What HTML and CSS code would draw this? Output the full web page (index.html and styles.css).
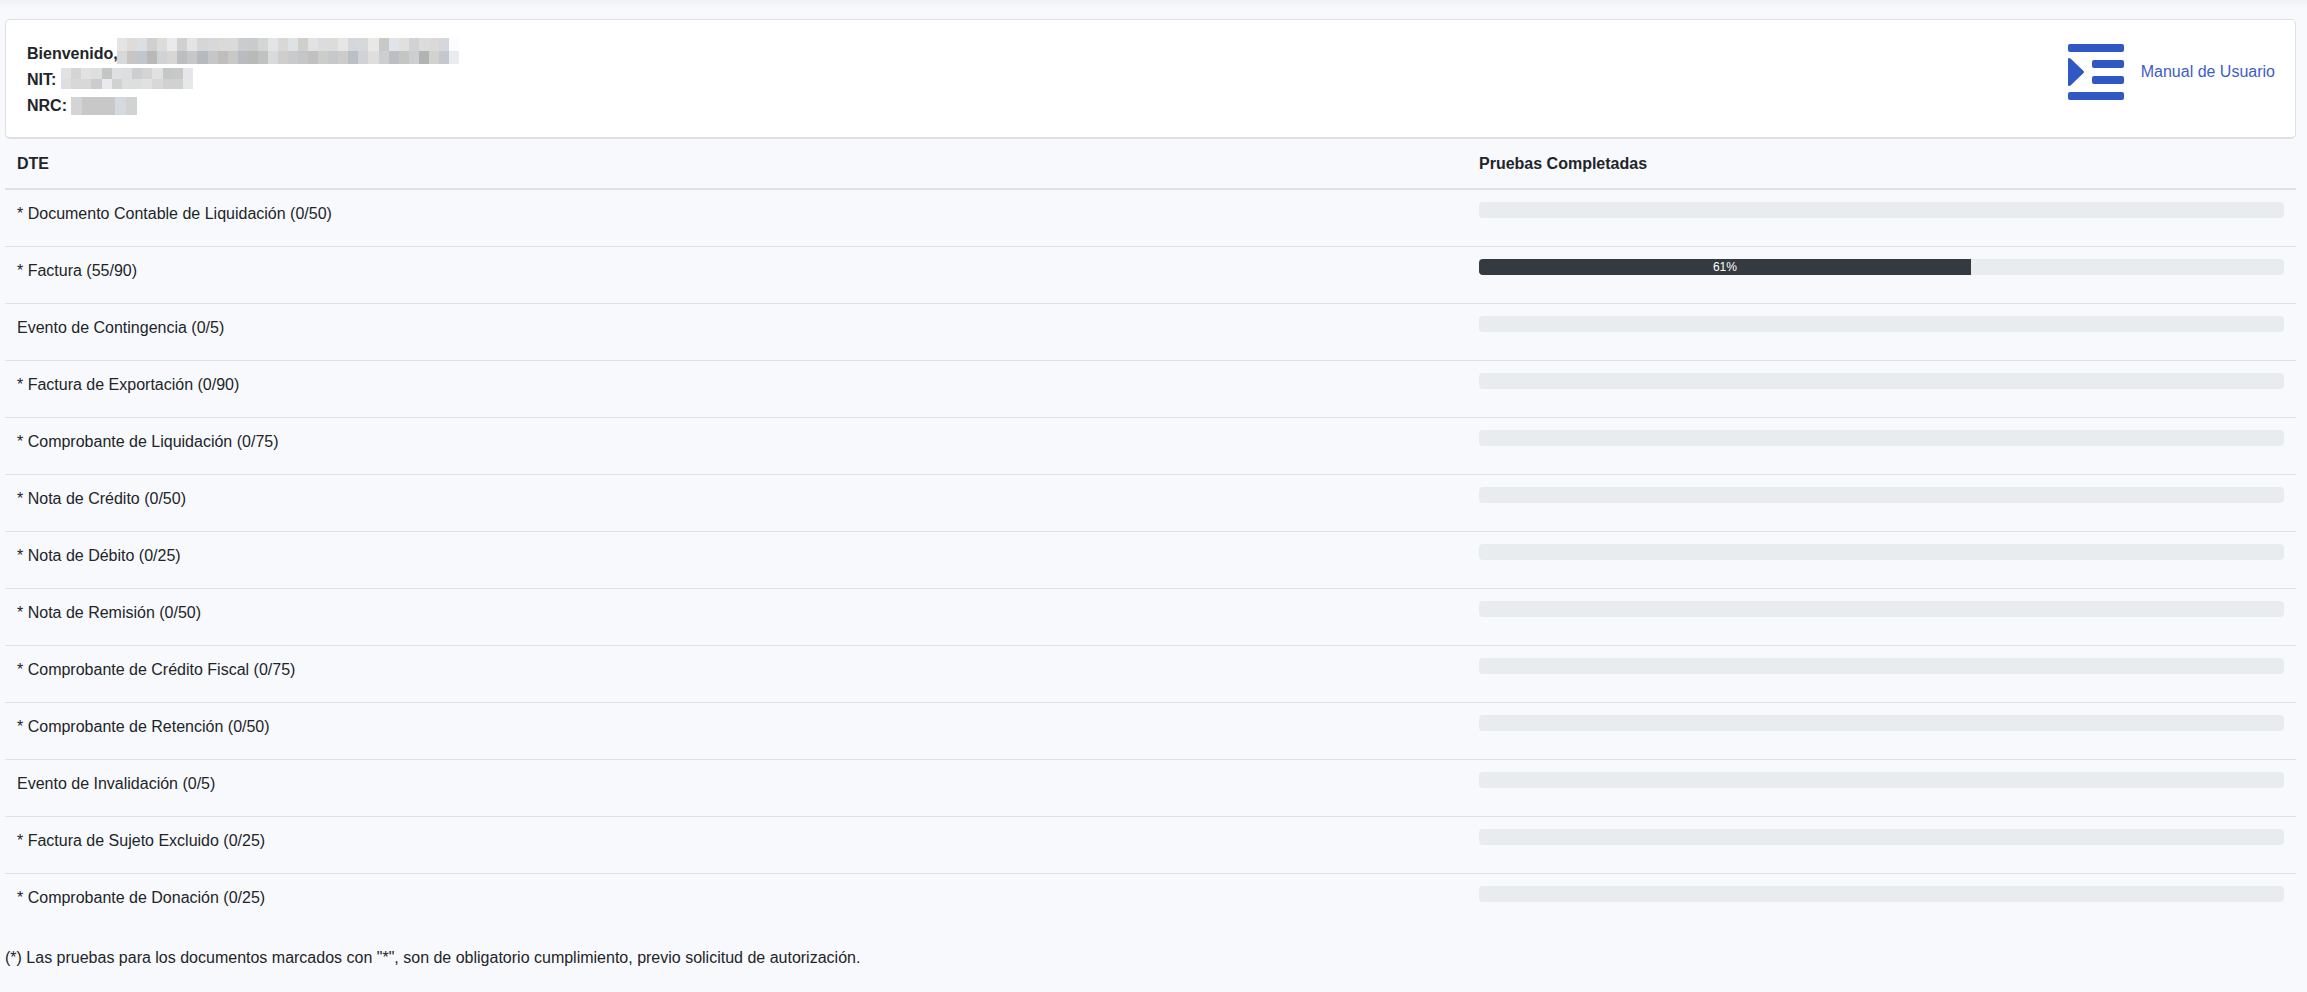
FILE: index.html
```html
<!DOCTYPE html>
<html lang="es">
<head>
<meta charset="utf-8">
<title>Pruebas DTE</title>
<link rel="stylesheet" href="styles.css">
</head>
<body>
<div class="topbar"></div>
<main class="page">
  <section class="card">
    <div class="who">
      <div class="line"><b>Bienvenido,</b>
        <svg class="mosaic m-name" width="342" height="26" viewBox="0 0 34 2" preserveAspectRatio="none" shape-rendering="crispEdges"><g>
          <rect x="0" y="0" width="1" height="1" fill="#e4e4e4"/><rect x="1" y="0" width="1" height="1" fill="#dedcda"/><rect x="2" y="0" width="1" height="1" fill="#d9dfe3"/><rect x="3" y="0" width="1" height="1" fill="#d0d0d0"/><rect x="4" y="0" width="1" height="1" fill="#dcdcda"/><rect x="5" y="0" width="1" height="1" fill="#e9eaec"/><rect x="6" y="0" width="1" height="1" fill="#cfd0d2"/><rect x="7" y="0" width="1" height="1" fill="#e4e4e4"/><rect x="8" y="0" width="1" height="1" fill="#d5d6d8"/><rect x="9" y="0" width="1" height="1" fill="#d6d8da"/><rect x="10" y="0" width="1" height="1" fill="#dadad8"/><rect x="11" y="0" width="1" height="1" fill="#dcdad8"/><rect x="12" y="0" width="1" height="1" fill="#cbcccd"/><rect x="13" y="0" width="1" height="1" fill="#cacbcd"/><rect x="14" y="0" width="1" height="1" fill="#d4d6d6"/><rect x="15" y="0" width="1" height="1" fill="#e2e4e6"/><rect x="16" y="0" width="1" height="1" fill="#d8d8d6"/><rect x="17" y="0" width="1" height="1" fill="#dfe2e4"/><rect x="18" y="0" width="1" height="1" fill="#cfcfcb"/><rect x="19" y="0" width="1" height="1" fill="#e0e2e4"/><rect x="20" y="0" width="1" height="1" fill="#dadcde"/><rect x="21" y="0" width="1" height="1" fill="#dcdcda"/><rect x="22" y="0" width="1" height="1" fill="#e6e6e6"/><rect x="23" y="0" width="1" height="1" fill="#d4d8dc"/><rect x="24" y="0" width="1" height="1" fill="#d6d8da"/><rect x="25" y="0" width="1" height="1" fill="#e8e8e6"/><rect x="26" y="0" width="1" height="1" fill="#c8c8c6"/><rect x="27" y="0" width="1" height="1" fill="#e0e4e8"/><rect x="28" y="0" width="1" height="1" fill="#e0e0de"/><rect x="29" y="0" width="1" height="1" fill="#d0d2d4"/><rect x="30" y="0" width="1" height="1" fill="#dcdcda"/><rect x="31" y="0" width="1" height="1" fill="#dcdad8"/><rect x="32" y="0" width="1" height="1" fill="#d4d8dc"/><rect x="33" y="0" width="1" height="1" fill="#fbfcfd"/>
          <rect x="0" y="1" width="1" height="1" fill="#d8d8d8"/><rect x="1" y="1" width="1" height="1" fill="#c8c6c4"/><rect x="2" y="1" width="1" height="1" fill="#c0c6ca"/><rect x="3" y="1" width="1" height="1" fill="#b8b8b8"/><rect x="4" y="1" width="1" height="1" fill="#d0d2d4"/><rect x="5" y="1" width="1" height="1" fill="#d8d6d2"/><rect x="6" y="1" width="1" height="1" fill="#bcbec2"/><rect x="7" y="1" width="1" height="1" fill="#c6c8c8"/><rect x="8" y="1" width="1" height="1" fill="#b4babe"/><rect x="9" y="1" width="1" height="1" fill="#c4c6c8"/><rect x="10" y="1" width="1" height="1" fill="#c0bebc"/><rect x="11" y="1" width="1" height="1" fill="#c8c8c6"/><rect x="12" y="1" width="1" height="1" fill="#b8bcc2"/><rect x="13" y="1" width="1" height="1" fill="#b8bab8"/><rect x="14" y="1" width="1" height="1" fill="#c0c2c2"/><rect x="15" y="1" width="1" height="1" fill="#d8dadc"/><rect x="16" y="1" width="1" height="1" fill="#d0cecc"/><rect x="17" y="1" width="1" height="1" fill="#c8cacc"/><rect x="18" y="1" width="1" height="1" fill="#c4c6c8"/><rect x="19" y="1" width="1" height="1" fill="#c2c0be"/><rect x="20" y="1" width="1" height="1" fill="#ccccca"/><rect x="21" y="1" width="1" height="1" fill="#c6c8ca"/><rect x="22" y="1" width="1" height="1" fill="#ccccca"/><rect x="23" y="1" width="1" height="1" fill="#b8c0c6"/><rect x="24" y="1" width="1" height="1" fill="#d0d2d6"/><rect x="25" y="1" width="1" height="1" fill="#e0dedc"/><rect x="26" y="1" width="1" height="1" fill="#ccced0"/><rect x="27" y="1" width="1" height="1" fill="#bcbec4"/><rect x="28" y="1" width="1" height="1" fill="#c4c6c6"/><rect x="29" y="1" width="1" height="1" fill="#ccced0"/><rect x="30" y="1" width="1" height="1" fill="#b0b2b4"/><rect x="31" y="1" width="1" height="1" fill="#d4d2ce"/><rect x="32" y="1" width="1" height="1" fill="#c4c8cc"/><rect x="33" y="1" width="1" height="1" fill="#e8ebf0"/>
        </g></svg>
      </div>
      <div class="line"><b>NIT:</b>
        <svg class="mosaic m-nit" width="132" height="21" viewBox="0 0 13 2" preserveAspectRatio="none" shape-rendering="crispEdges"><g>
          <rect x="0" y="0" width="1" height="1" fill="#e0e2e4"/><rect x="1" y="0" width="1" height="1" fill="#d4d4d4"/><rect x="2" y="0" width="1" height="1" fill="#e2e2e2"/><rect x="3" y="0" width="1" height="1" fill="#dcdee0"/><rect x="4" y="0" width="1" height="1" fill="#c4c6c6"/><rect x="5" y="0" width="1" height="1" fill="#dee0e4"/><rect x="6" y="0" width="1" height="1" fill="#dcdee0"/><rect x="7" y="0" width="1" height="1" fill="#ccced0"/><rect x="8" y="0" width="1" height="1" fill="#d4d4d6"/><rect x="9" y="0" width="1" height="1" fill="#e0e2e2"/><rect x="10" y="0" width="1" height="1" fill="#c4c6c8"/><rect x="11" y="0" width="1" height="1" fill="#c8c8c8"/><rect x="12" y="0" width="1" height="1" fill="#e4e6ea"/>
          <rect x="0" y="1" width="1" height="1" fill="#dedede"/><rect x="1" y="1" width="1" height="1" fill="#d8d8d8"/><rect x="2" y="1" width="1" height="1" fill="#d8d8d8"/><rect x="3" y="1" width="1" height="1" fill="#cccccc"/><rect x="4" y="1" width="1" height="1" fill="#e8eaee"/><rect x="5" y="1" width="1" height="1" fill="#d0d2d2"/><rect x="6" y="1" width="1" height="1" fill="#dcdee0"/><rect x="7" y="1" width="1" height="1" fill="#dcdee0"/><rect x="8" y="1" width="1" height="1" fill="#e0e2e2"/><rect x="9" y="1" width="1" height="1" fill="#d8d8d8"/><rect x="10" y="1" width="1" height="1" fill="#d0d2d2"/><rect x="11" y="1" width="1" height="1" fill="#d0d2d2"/><rect x="12" y="1" width="1" height="1" fill="#e6e8ea"/>
        </g></svg>
      </div>
      <div class="line"><b>NRC:</b>
        <svg class="mosaic m-nrc" width="66" height="18" viewBox="0 0 6 1" preserveAspectRatio="none" shape-rendering="crispEdges"><g>
          <rect x="0" y="0" width="1" height="1" fill="#d4d4d4"/><rect x="1" y="0" width="1" height="1" fill="#c8c8c8"/><rect x="2" y="0" width="1" height="1" fill="#c8c8c8"/><rect x="3" y="0" width="1" height="1" fill="#c8c8c8"/><rect x="4" y="0" width="1" height="1" fill="#d4dade"/><rect x="5" y="0" width="1" height="1" fill="#d0d2d4"/>
        </g></svg>
      </div>
    </div>
    <a class="manual" href="#">
      <svg class="icon" width="56" height="56" viewBox="0 0 56 56"><g fill="#2f58c4"><rect x="0" y="0" width="56" height="8" rx="2"/><rect x="24" y="16" width="32" height="8" rx="2"/><rect x="24" y="32" width="32" height="8" rx="2"/><rect x="0" y="48" width="56" height="8" rx="2"/><path d="M0 15.500C0 14 1.500 13.500 2.500 14.500L15.500 27C16.200 27.600 16.200 28.400 15.500 29L2.500 41.500C1.500 42.500 0 42 0 40.500Z"/></g></svg>
      <span>Manual de Usuario</span>
    </a>
  </section>
  <table class="grid">
    <thead><tr><th class="c1">DTE</th><th>Pruebas Completadas</th></tr></thead>
    <tbody>
      <tr><td>* Documento Contable de Liquidación (0/50)</td><td><div class="bar"></div></td></tr>
      <tr><td>* Factura (55/90)</td><td><div class="bar"><div class="fill" style="width:61.11%">61%</div></div></td></tr>
      <tr><td>Evento de Contingencia (0/5)</td><td><div class="bar"></div></td></tr>
      <tr><td>* Factura de Exportación (0/90)</td><td><div class="bar"></div></td></tr>
      <tr><td>* Comprobante de Liquidación (0/75)</td><td><div class="bar"></div></td></tr>
      <tr><td>* Nota de Crédito (0/50)</td><td><div class="bar"></div></td></tr>
      <tr><td>* Nota de Débito (0/25)</td><td><div class="bar"></div></td></tr>
      <tr><td>* Nota de Remisión (0/50)</td><td><div class="bar"></div></td></tr>
      <tr><td>* Comprobante de Crédito Fiscal (0/75)</td><td><div class="bar"></div></td></tr>
      <tr><td>* Comprobante de Retención (0/50)</td><td><div class="bar"></div></td></tr>
      <tr><td>Evento de Invalidación (0/5)</td><td><div class="bar"></div></td></tr>
      <tr><td>* Factura de Sujeto Excluido (0/25)</td><td><div class="bar"></div></td></tr>
      <tr class="last"><td>* Comprobante de Donación (0/25)</td><td><div class="bar"></div></td></tr>
    </tbody>
  </table>
  <p class="note">(*) Las pruebas para los documentos marcados con "*", son de obligatorio cumplimiento, previo solicitud de autorización.</p>
</main>
</body>
</html>
```
FILE: styles.css
```css
* { box-sizing: border-box; }
html, body { margin: 0; padding: 0; }
body { height: 992px; overflow: hidden; background: #f8f9fc; color: #212529; font-family: "Liberation Sans", Arial, sans-serif; font-size: 16px; line-height: 24px; }
.topbar { height: 8px; background: linear-gradient(#f1f2f5, #f8f9fc); }
.page { padding: 11px 11px 0 5px; }
.card { height: 120px; background: #fff; border: 1px solid #dfe0e3; border-bottom-width: 2px; border-radius: 5px; display: flex; justify-content: space-between; align-items: flex-start; padding: 21px 20px 0 21px; }
.who { line-height: 26px; }
.line { display: flex; height: 26px; align-items: center; }
.line b { font-weight: 700; position: relative; z-index: 1; }
.mosaic { display: block; flex: none; }
.m-name { margin: -3px 0 0 -0.5px; align-self: flex-start; }
.m-nit { margin: 1px 0 0 5px; align-self: flex-start; }
.m-nrc { margin-left: 4px; }
.manual { display: flex; align-items: center; gap: 17px; margin-top: 3px; color: #3f5cc6; text-decoration: none; }
.icon { display: block; }
.grid { width: 100%; border-collapse: collapse; table-layout: fixed; }
.grid th { text-align: left; padding: 12px; height: 50px; font-weight: 700; border-bottom: 2px solid #dfe1e6; }
.grid th.c1 { width: 1462px; }
.grid td { height: 57px; padding: 12px; vertical-align: top; border-bottom: 1px solid #dfe1e6; }
.grid tr.last td { border-bottom: 0; }
.bar { height: 16px; background: #e9ecef; border-radius: 4px; overflow: hidden; }
.fill { height: 16px; background: #343a40; color: #fff; font-size: 12px; line-height: 16px; text-align: center; }
.note { margin: 16px 0 0; }
```
